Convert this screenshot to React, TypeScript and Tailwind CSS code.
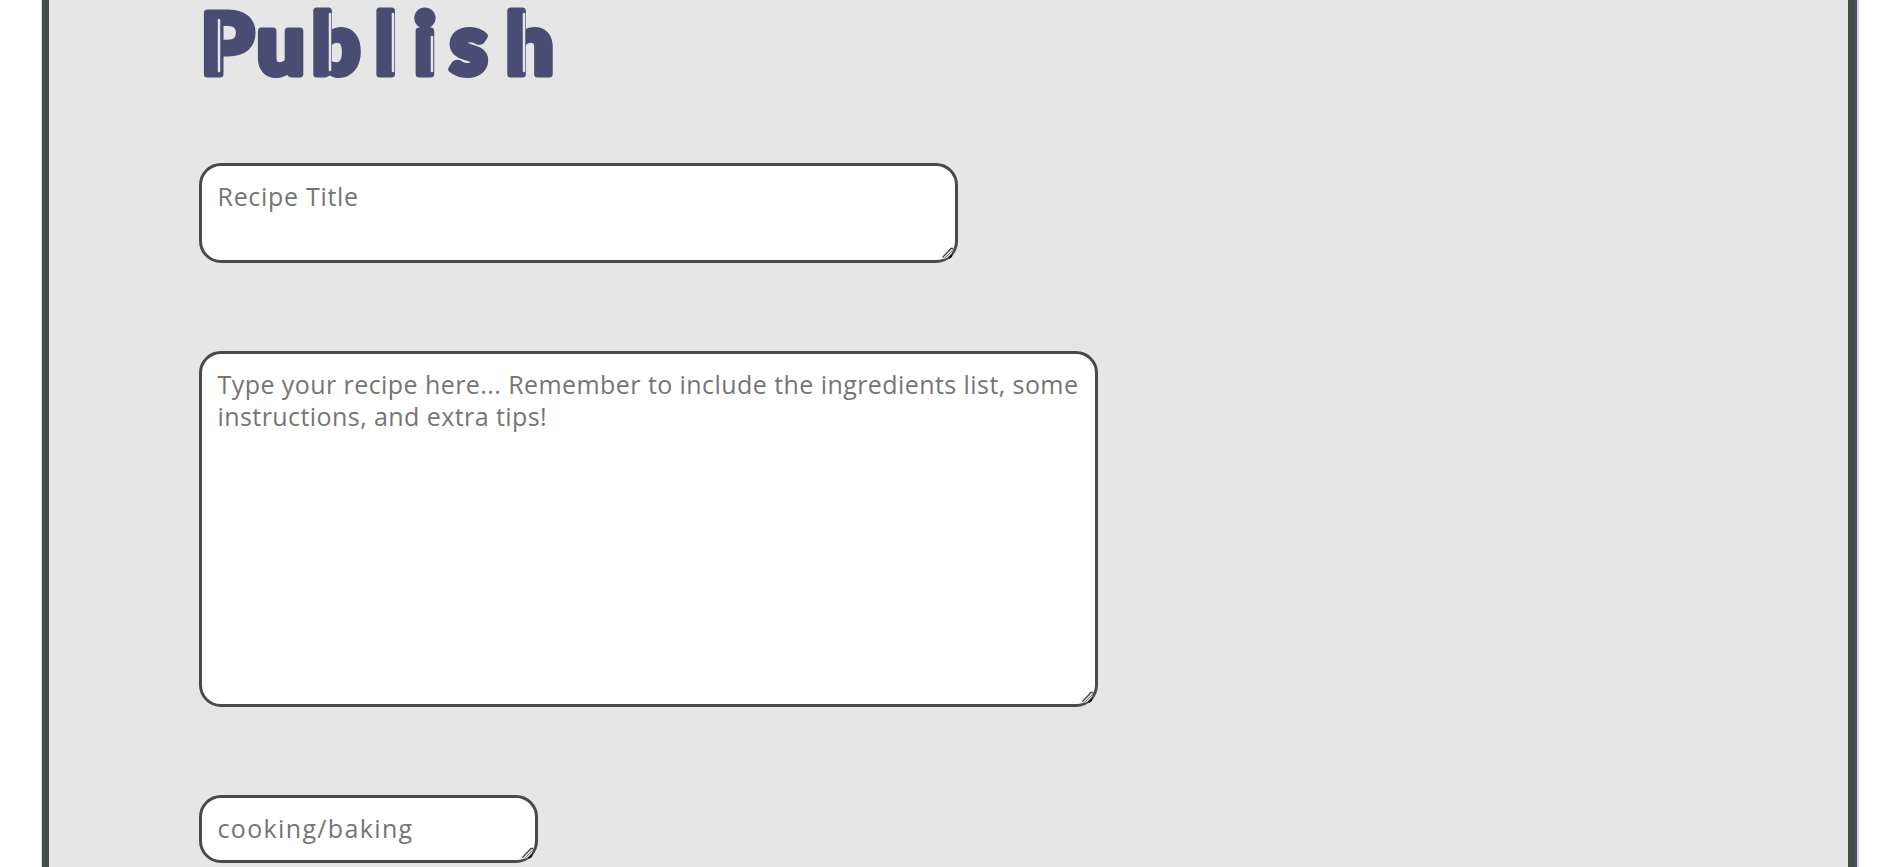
import clsx from 'clsx';

function Title() {
  return (
    <h1 className="h-[163px] font-['Lato',sans-serif] text-[84px] font-black">
      <svg width="370" height="90" viewBox="0 0 370 90" className="overflow-visible">
        <text
          x="2 58 113 176 215 251 307"
          y="73.5"
          fill="#4a4c73"
          stroke="#4a4c73"
          strokeWidth="7"
          strokeLinejoin="round"
        >
          Publish
        </text>
        <g stroke="#e6e6e6" strokeWidth="2.5" strokeLinecap="round">
          <path d="M20 20V71" />
          <path d="M131 14V70" />
          <path d="M194 14V71" />
          <path d="M233 37V71" />
          <path d="M325 14V71" />
        </g>
      </svg>
    </h1>
  );
}

function Field({
  placeholder,
  className,
}: {
  placeholder: string;
  className: string;
}) {
  return (
    <div className="relative w-fit">
      <textarea
        className={clsx(
          "block resize-none overflow-hidden rounded-[22px] border-3 border-[#464d49] bg-white py-[14px] pr-[13px] pl-[15.5px] font-['Open_Sans',sans-serif] text-[25px] leading-8 text-[#464d49] outline-none placeholder:text-[#757575]",
          className,
        )}
        placeholder={placeholder}
      />
      <svg
        className="pointer-events-none absolute right-[3px] bottom-[3px]"
        width="14"
        height="14"
        viewBox="0 0 14 14"
        fill="none"
      >
        <path d="M1.5 11.5 10 2.5l2 .5-1 4-5 5-3 1Z" fill="#e6e6e6" />
        <path d="M1.5 11.5 10 2.5h2" stroke="#464649" strokeWidth="1.3" />
        <path d="m3.5 12.5 8-8" stroke="#777" strokeWidth="1" />
        <path d="m7 12 5-5-1 4-3 2Z" fill="#111" />
      </svg>
    </div>
  );
}

export default function App() {
  return (
    <div className="h-screen overflow-hidden bg-white pl-[42px]">
      <main className="h-full w-[1815px] border-r-2 border-[#4a4c73] shadow-[2px_0_0_#d4d0e4,-1px_0_0_#dcdce4]">
        <section className="h-full border-x-7 border-[#464d49] bg-[#e6e6e6] pl-[150px]">
          <Title />
          <form className="flex flex-col gap-[88px]">
            <Field
              className="h-[100px] w-[759px] tracking-[0.7px]"
              placeholder="Recipe Title"
            />
            <Field
              className="h-[356px] w-[899px] tracking-[0.43px]"
              placeholder="Type your recipe here... Remember to include the ingredients list, some instructions, and extra tips!"
            />
            <Field
              className="h-[68px] w-[339px] tracking-[1.35px]"
              placeholder="cooking/baking"
            />
          </form>
        </section>
      </main>
    </div>
  );
}
